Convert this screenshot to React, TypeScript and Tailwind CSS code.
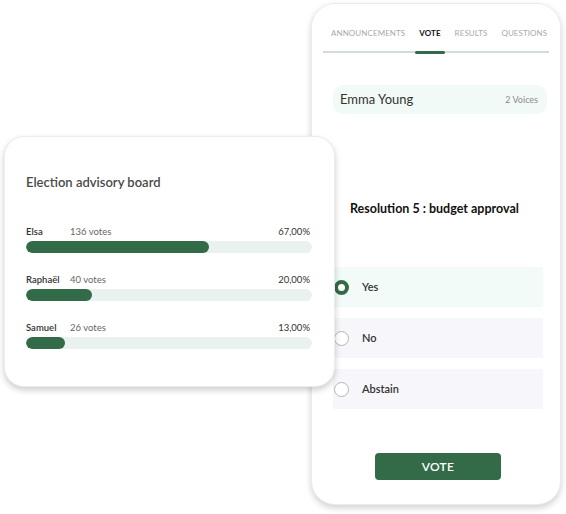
import React from 'react';

const font = { fontFamily: 'Lato, "Noto Sans", sans-serif' };

const results = [
  { name: 'Elsa', votes: '136 votes', pct: '67,00%', fill: 'w-[64%]' },
  { name: 'Raphaël', votes: '40 votes', pct: '20,00%', fill: 'w-[23%]' },
  { name: 'Samuel', votes: '26 votes', pct: '13,00%', fill: 'w-[13.5%]' },
];

const tabs = ['Announcements', 'Vote', 'Results', 'Questions'];

const options = [
  { label: 'Yes', selected: true },
  { label: 'No', selected: false },
  { label: 'Abstain', selected: false },
];

const Radio: React.FC<{ selected: boolean }> = ({ selected }) =>
  selected ? (
    <span className="w-[15px] h-[15px] rounded-full border-[4px] border-[#336a48] bg-white shrink-0" />
  ) : (
    <span className="w-[15px] h-[15px] rounded-full border border-[#b5b5b5] bg-white shrink-0" />
  );

const PhoneCard: React.FC = () => (
  <div className="absolute left-[311px] top-[3px] w-[250px] h-[502px] bg-white rounded-[24px] border border-[#ececec] shadow-[0_3px_6px_rgba(0,0,0,0.18)] px-[11px] pt-[14px]">
    <div className="relative">
      <div className="flex gap-[6px] pl-[4px]">
        {tabs.map(tab => {
          const active = tab === 'Vote';
          return (
            <div key={tab} className="relative px-[4px] pb-[9px]">
              <span
                className={`uppercase text-[8px] leading-[10px] tracking-[0.01em] ${
                  active ? 'font-bold text-[#111]' : 'text-[#a9a9a9]'
                }`}
              >
                {tab}
              </span>
              {active && <div className="absolute left-0 right-0 bottom-[-3px] h-[3px] bg-[#336a48] rounded-sm" />}
            </div>
          );
        })}
      </div>
      <div className="h-[2px] bg-[#d3dadc]" />
    </div>

    <div className="mt-[32px] ml-[10px] mr-[2px] h-[29px] rounded-[10px] bg-[#f2faf7] flex items-center justify-between pl-[7px] pr-[9px]">
      <span className="text-[13px] text-[#333]">Emma Young</span>
      <span className="text-[9px] text-[#8a8a8a]">2 Voices</span>
    </div>

    <div className="mt-[87px] pl-[27px] text-[12.5px] font-bold text-[#111] leading-[16px]">
      Resolution 5 : budget approval
    </div>

    <div className="mt-[50px] ml-[10px] mr-[6px] flex flex-col gap-[11px]">
      {options.map(opt => (
        <div
          key={opt.label}
          className={`h-[40px] flex items-center gap-[13px] pl-[1px] ${
            opt.selected ? 'bg-[#f2fbf7]' : 'bg-[#f7f7fb]'
          }`}
        >
          <Radio selected={opt.selected} />
          <span className="text-[11px] font-semibold text-[#333]">{opt.label}</span>
        </div>
      ))}
    </div>

    <div className="mt-[44px] flex justify-center pl-[4px]">
      <button className="w-[126px] h-[27px] rounded-[4px] bg-[#336a48] text-white text-[12px] font-semibold tracking-[0.02em]">
        VOTE
      </button>
    </div>
  </div>
);

const ResultsCard: React.FC = () => (
  <div className="absolute left-[4px] top-[136px] w-[331px] h-[251px] bg-white rounded-[20px] border border-[#ececec] shadow-[0_3px_6px_rgba(0,0,0,0.2)] pl-[21px] pr-[22px] pt-[36px]">
    <h2 className="text-[13px] font-semibold text-[#4a4a4a] leading-[18px]">Election advisory board</h2>
    <div className="mt-[35px] flex flex-col gap-[21px]">
      {results.map(r => (
        <div key={r.name}>
          <div className="flex items-center text-[9.5px] leading-[12px] pr-[2px]">
            <span className="w-[44px] font-semibold text-[#333]">{r.name}</span>
            <span className="text-[#666]">{r.votes}</span>
            <span className="ml-auto text-[#333]">{r.pct}</span>
          </div>
          <div className="mt-[3px] h-[12px] rounded-full bg-[#e9f2ef] overflow-hidden">
            <div className={`h-full rounded-full bg-[#336a48] ${r.fill}`} />
          </div>
        </div>
      ))}
    </div>
  </div>
);

export default function App() {
  return (
    <div className="relative w-[566px] h-[514px] bg-white overflow-hidden" style={font}>
      <PhoneCard />
      <ResultsCard />
    </div>
  );
}
